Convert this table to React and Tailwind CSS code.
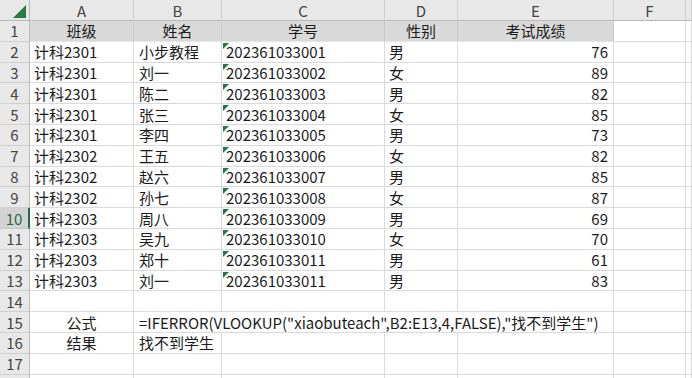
import React from "react";

const data = [
  ["计科2301", "小步教程", "202361033001", "男", 76],
  ["计科2301", "刘一", "202361033002", "女", 89],
  ["计科2301", "陈二", "202361033003", "男", 82],
  ["计科2301", "张三", "202361033004", "女", 85],
  ["计科2301", "李四", "202361033005", "男", 73],
  ["计科2302", "王五", "202361033006", "女", 82],
  ["计科2302", "赵六", "202361033007", "男", 85],
  ["计科2302", "孙七", "202361033008", "女", 87],
  ["计科2303", "周八", "202361033009", "男", 69],
  ["计科2303", "吴九", "202361033010", "女", 70],
  ["计科2303", "郑十", "202361033011", "男", 61],
  ["计科2303", "刘一", "202361033011", "男", 83],
];

const cols = ["A", "B", "C", "D", "E", "F", ""];

function Cell({ children, className = "" }) {
  return (
    <div
      className={
        "relative flex items-center overflow-visible whitespace-nowrap border-b border-r border-[#dadada] text-[15px] leading-none text-[#1b1b1b] " +
        className
      }
    >
      {children}
    </div>
  );
}

function RowHead({ n, active }) {
  return (
    <div
      className={
        "flex items-center justify-center border-b border-r text-[15px] leading-none " +
        (active
          ? "border-r-2 border-b-[#c6c6c6] border-r-[#217346] bg-[#d3d3d3] text-[#1e6b40]"
          : "border-b-[#cfcfcf] border-r-[#b9b9b9] bg-[#e8e8e8] text-[#444]")
      }
    >
      {n}
    </div>
  );
}

function Tri() {
  return (
    <svg className="absolute left-[1px] top-[1px]" width="6" height="6" viewBox="0 0 6 6">
      <polygon points="0,0 6,0 0,6" fill="#1f7a45" />
    </svg>
  );
}

export default function App() {
  const cells = [];
  cells.push(
    <div key="corner" className="relative border-b border-r border-[#b9b9b9] bg-[#e8e8e8]">
      <svg className="absolute left-[13px] top-[5px]" width="13" height="13" viewBox="0 0 13 13">
        <polygon points="13,0 13,13 0,13" fill="#2a7a48" />
      </svg>
    </div>
  );
  cols.forEach((c, i) => {
    cells.push(
      <div
        key={"h" + i}
        className="flex items-center justify-center border-b border-r border-b-[#b9b9b9] border-r-[#cfcfcf] bg-[#e8e8e8] text-[15px] leading-none text-[#444]"
      >
        {c}
      </div>
    );
  });

  cells.push(<RowHead key="r1" n={1} />);
  ["班级", "姓名", "学号", "性别", "考试成绩"].forEach((t, i) => {
    cells.push(
      <Cell key={"t" + i} className="justify-center bg-[#d9d9d9] border-r-[#c8c8c8] border-b-[#e6e6e6]">
        {t}
      </Cell>
    );
  });
  cells.push(<Cell key="t5" />);
  cells.push(<Cell key="t6" />);

  data.forEach((r, idx) => {
    const n = idx + 2;
    cells.push(<RowHead key={"rh" + n} n={n} active={n === 10} />);
    cells.push(<Cell key={"a" + n} className="pl-[4px]">{r[0]}</Cell>);
    cells.push(<Cell key={"b" + n} className="pl-[5px]">{r[1]}</Cell>);
    cells.push(
      <Cell key={"c" + n} className="pl-[4px]">
        <Tri />
        {r[2]}
      </Cell>
    );
    cells.push(<Cell key={"d" + n} className="pl-[4px]">{r[3]}</Cell>);
    cells.push(<Cell key={"e" + n} className="justify-end pr-[5px]">{r[4]}</Cell>);
    cells.push(<Cell key={"f" + n} />);
    cells.push(<Cell key={"g" + n} />);
  });

  cells.push(<RowHead key="r14" n={14} />);
  for (let i = 0; i < 7; i++) cells.push(<Cell key={"r14c" + i} />);

  cells.push(<RowHead key="r15" n={15} />);
  cells.push(<Cell key="r15a" className="justify-center">公式</Cell>);
  cells.push(
    <Cell key="r15b" className="col-span-4 pl-[5px]">
      =IFERROR(VLOOKUP("xiaobuteach",B2:E13,4,FALSE),"找不到学生")
    </Cell>
  );
  cells.push(<Cell key="r15f" />);
  cells.push(<Cell key="r15g" />);

  cells.push(<RowHead key="r16" n={16} />);
  cells.push(<Cell key="r16a" className="justify-center">结果</Cell>);
  cells.push(<Cell key="r16b" className="pl-[5px]">找不到学生</Cell>);
  for (let i = 0; i < 5; i++) cells.push(<Cell key={"r16c" + i} />);

  cells.push(<RowHead key="r17" n={17} />);
  for (let i = 0; i < 7; i++) cells.push(<Cell key={"r17c" + i} />);

  cells.push(<RowHead key="r18" n="" />);
  for (let i = 0; i < 7; i++) cells.push(<Cell key={"r18c" + i} />);

  return (
    <div
      className="h-[378px] w-[692px] overflow-hidden bg-white"
      style={{ fontFamily: '"Noto Sans CJK SC", "Noto Sans", sans-serif' }}
    >
      <div className="grid grid-cols-[30px_104px_88px_163px_73px_156px_72px_1fr] grid-rows-[21px_repeat(18,20.8px)]">
        {cells}
      </div>
    </div>
  );
}
